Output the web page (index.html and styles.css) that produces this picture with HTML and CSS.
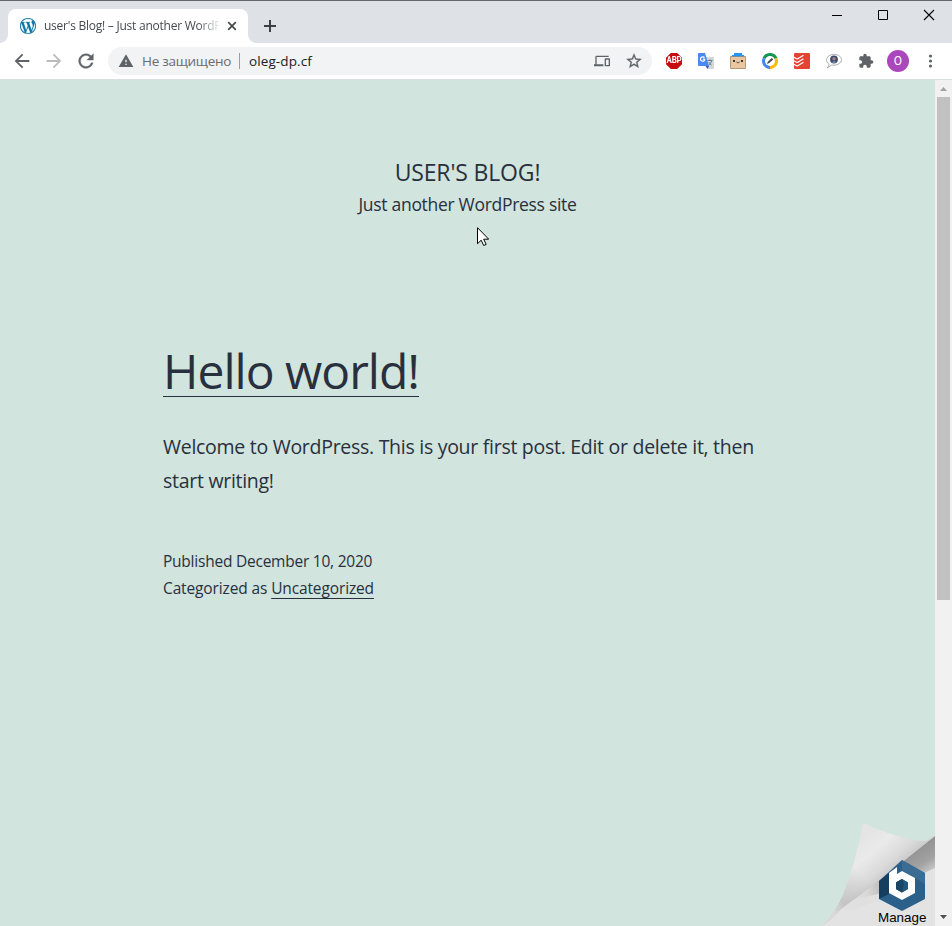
FILE: index.html
```html
<!DOCTYPE html>
<html lang="en">
<head>
<meta charset="utf-8">
<title>user's Blog! – Just another WordPress site</title>
<link rel="stylesheet" href="styles.css">
</head>
<body>
<div class="window">
  <header class="titlebar">
    <div class="tab">
      <svg class="favicon" viewBox="0 0 24 24"><circle cx="12" cy="12" r="11.5" fill="#fff"/><path fill="#1175a3" stroke="#1175a3" stroke-width=".4" d="M21.469 6.825c.84 1.537 1.318 3.3 1.318 5.175 0 3.979-2.156 7.456-5.363 9.325l3.295-9.527c.615-1.54.82-2.771.82-3.864 0-.405-.026-.78-.07-1.11m-7.981.105c.647-.03 1.232-.105 1.232-.105.582-.075.514-.93-.067-.899 0 0-1.755.135-2.88.135-1.064 0-2.85-.15-2.85-.15-.585-.03-.661.855-.075.885 0 0 .54.061 1.125.09l1.68 4.605-2.37 7.08L5.354 6.9c.649-.03 1.234-.1 1.234-.1.585-.075.516-.93-.065-.896 0 0-1.746.138-2.874.138-.2 0-.438-.008-.69-.015C4.911 3.15 8.235 1.215 12 1.215c2.809 0 5.365 1.072 7.286 2.833-.046-.003-.091-.009-.141-.009-1.06 0-1.812.923-1.812 1.914 0 .89.513 1.643 1.06 2.531.411.72.89 1.643.89 2.977 0 .915-.354 1.994-.821 3.479l-1.075 3.585-3.9-11.61.001.014zM12 22.784c-1.059 0-2.081-.153-3.048-.437l3.237-9.406 3.315 9.087c.024.053.05.101.078.149-1.12.393-2.325.609-3.582.609M1.211 12c0-1.564.336-3.05.935-4.39L7.29 21.709C3.694 19.96 1.212 16.271 1.211 12M12 0C5.385 0 0 5.385 0 12s5.385 12 12 12 12-5.385 12-12S18.615 0 12 0"/></svg>
      <span class="tab-title">user's Blog! – Just another WordP</span>
      <svg class="tab-close" viewBox="0 0 10 10"><path d="M1.2 1.2l7.6 7.6M8.800 1.200l-7.600 7.600" stroke="#45494d" stroke-width="1.7"/></svg>
    </div>
    <svg class="new-tab" viewBox="0 0 12 12"><path d="M6 0v12M0 6h12" stroke="#3c4043" stroke-width="2"/></svg>
    <div class="window-controls">
      <svg viewBox="0 0 46 30"><path d="M18 15.500h10" stroke="#000"/></svg>
      <svg viewBox="0 0 46 30"><path d="M18.500 10.500h9v9h-9z" fill="none" stroke="#000"/></svg>
      <svg viewBox="0 0 46 30"><path d="M18 10l10 10M28 10L18 20" stroke="#000" stroke-width="1.100"/></svg>
    </div>
  </header>

  <nav class="toolbar">
    <div class="nav-buttons">
      <svg viewBox="0 0 24 24"><path fill="#5f6368" d="M20 11H7.830l5.590-5.590L12 4l-8 8 8 8 1.410-1.410L7.830 13H20v-2z"/></svg>
      <svg viewBox="0 0 24 24"><path fill="#babcbe" d="M4 11h12.170l-5.590-5.590L12 4l8 8-8 8-1.410-1.410L16.170 13H4v-2z"/></svg>
      <svg viewBox="0 0 24 24"><path fill="#5f6368" stroke="#5f6368" stroke-width=".4" d="M17.650 6.350C16.200 4.900 14.210 4 12 4c-4.420 0-7.990 3.580-7.990 8s3.570 8 7.990 8c3.730 0 6.840-2.550 7.730-6h-2.080c-.82 2.330-3.040 4-5.650 4-3.310 0-6-2.690-6-6s2.690-6 6-6c1.660 0 3.140.69 4.220 1.780L13 11h7V4l-2.350 2.350z"/></svg>
    </div>
    <div class="omnibox">
      <svg class="warning" viewBox="0 0 24 24"><path fill="#5f6368" d="M1 21h22L12 2 1 21zm12-3h-2v-2h2v2zm0-4h-2v-4h2v4z"/></svg>
      <span class="security">Не защищено</span>
      <span class="divider"></span>
      <span class="url">oleg-dp.cf</span>
      <svg class="devices" viewBox="0 0 24 24"><path fill="#5f6368" d="M4 6h18V4H4c-1.100 0-2 .9-2 2v11H0v3h14v-3H4V6zm19 2h-6c-.55 0-1 .45-1 1v10c0 .55.45 1 1 1h6c.55 0 1-.45 1-1V9c0-.55-.45-1-1-1zm-1 10h-4v-8h4v8z"/></svg>
      <svg class="star" viewBox="0 0 24 24"><path fill="#5f6368" stroke="#5f6368" stroke-width=".4" d="M22 9.240l-7.190-.62L12 2 9.190 8.630 2 9.240l5.460 4.730L5.820 21 12 17.270 18.180 21l-1.630-7.030L22 9.240zM12 15.400l-3.760 2.270 1-4.280-3.320-2.880 4.380-.38L12 6.100l1.710 4.040 4.380.38-3.320 2.880 1 4.280L12 15.400z"/></svg>
    </div>
    <div class="extensions">
      <span class="abp"><span>ABP</span></span>
      <svg viewBox="0 0 16 16"><path fill="#d5d8da" d="M6 4h9.300q.7 0 .7.700v10.600q0 .7-.7.700H10z"/><path fill="#4a89f3" d="M.7 0H7l4 13H.7Q0 13 0 12.300V.7Q0 0 .7 0z"/><path fill="#3059b5" d="M7.500 13H11l-1.500 3z"/><path d="M6.900 6.200H5M6.500 4.700A2.200 2.200 0 1 0 6.900 6.200" fill="none" stroke="#fff" stroke-width="1.200"/><path d="M9.500 7.500h5M12 6.300v1.200M13.800 7.600q-.8 3-3 4.400M10.700 9q1 2 3 3.200" fill="none" stroke="#647882" stroke-width=".9"/></svg>
      <svg viewBox="0 0 16 16"><path fill="#2694f3" d="M4 0h8v2h2v2H2V2h2z"/><path fill="#e9c5a0" stroke="#a58562" stroke-width=".8" d="M.5 3.500h15v12H.5z"/><path fill="#2694f3" d="M2 2h12v1.300H2z"/><circle cx="4" cy="8" r="1"/><circle cx="12" cy="8" r="1"/><path d="M6.500 9l.8.700.700-.7.700.700.8-.7" fill="none" stroke="#222" stroke-width=".8"/></svg>
      <svg viewBox="0 0 16 16"><path fill="#159754" d="M8 8L.7 4.700a8 8 0 0 1 14.600 0z"/><path fill="#fbbc05" d="M8 8l7.300-3.300A8 8 0 0 1 8 16z"/><path fill="#4285f4" d="M8 8v8A8 8 0 0 1 .7 4.700z"/><circle cx="8" cy="8" r="5" fill="#fff"/><path d="M5 11l.8-2.300 4-3.700 1.400 1.400-4 3.700z" fill="#41464b"/></svg>
      <svg viewBox="0 0 16 16"><rect width="16" height="16" rx="1.200" fill="#e44332"/><path d="M0 4.400l2.500 1.300q.7.300 1.300 0L9.500 2.300M0 7.900l2.500 1.300q.7.300 1.300 0L9.500 5.800M0 11.400l2.500 1.300q.7.300 1.300 0L9.500 9.300" fill="none" stroke="#fff" stroke-width="1.200"/></svg>
      <svg viewBox="0 0 16 16"><path d="M3 11.200C-1 8.500.2 3.800 4.500 2q4-1.600 8 .3c4 2.300 3.800 6.500.2 8.600q-3 1.900-7.200 1.200L1.200 15q1.700-1.600 1.800-3.800z" fill="#fff" stroke="#a4a4a4" stroke-width=".9"/><circle cx="8" cy="6.500" r="3.900" fill="#3d4b68"/><circle cx="8" cy="5.800" r="1.700" fill="#9b8290"/><path d="M5.500 9.800q2.500-3 5 0z" fill="#8396bb"/></svg>
      <svg viewBox="0 0 24 24"><path fill="#5f6368" d="M20.500 11H19V7c0-1.100-.9-2-2-2h-4V3.500C13 2.120 11.880 1 10.500 1S8 2.120 8 3.500V5H4c-1.100 0-1.990.9-1.990 2v3.800H3.500c1.490 0 2.700 1.210 2.700 2.700s-1.210 2.700-2.700 2.700H2V20c0 1.100.9 2 2 2h3.800v-1.500c0-1.490 1.210-2.700 2.700-2.700 1.490 0 2.700 1.210 2.700 2.700V22H17c1.100 0 2-.9 2-2v-4h1.500c1.380 0 2.500-1.120 2.500-2.500S21.880 11 20.500 11z"/></svg>
      <span class="avatar">O</span>
      <svg viewBox="0 0 16 16"><g fill="#5f6368"><circle cx="8.500" cy="3" r="1.600"/><circle cx="8.500" cy="8" r="1.600"/><circle cx="8.500" cy="13" r="1.600"/></g></svg>
    </div>
  </nav>

  <div class="viewport">
    <main class="page">
      <header class="site-header">
        <h1 class="site-title">User's Blog!</h1>
        <p class="site-tagline">Just another WordPress site</p>
      </header>
      <article class="post">
        <h2 class="post-title"><a>Hello world!</a></h2>
        <p class="post-body">Welcome to WordPress. This is your first post. Edit or delete it, then<br>start writing!</p>
        <footer class="post-meta">
          <div class="published">Published December 10, 2020</div>
          <div class="category">Categorized as <a>Uncategorized</a></div>
        </footer>
      </article>
      <svg class="cursor" viewBox="0 0 12 19"><path d="M.5.700v16l3.700-3.500 2.500 5.300 2.500-1.100-2.500-5.200h5z" fill="#fff" stroke="#000"/></svg>
      <div class="corner">
        <svg viewBox="0 0 123 116">
          <defs>
            <linearGradient id="curl" x1="46" y1="30" x2="80" y2="70" gradientUnits="userSpaceOnUse"><stop offset="0" stop-color="#e4e4e4"/><stop offset=".35" stop-color="#eaeaea"/><stop offset=".7" stop-color="#dadada"/><stop offset="1" stop-color="#c0c0c0"/></linearGradient>
            <linearGradient id="under" x1="84" y1="53" x2="104" y2="84" gradientUnits="userSpaceOnUse"><stop offset="0" stop-color="#949494"/><stop offset=".4" stop-color="#a2a2a2"/><stop offset=".75" stop-color="#cdcdcd"/><stop offset="1" stop-color="#e3e3e3"/></linearGradient>
            <linearGradient id="fade" x1="36" y1="0" x2="84" y2="0" gradientUnits="userSpaceOnUse"><stop offset="0" stop-color="#e0e0e0"/><stop offset=".4" stop-color="#dfdfdf" stop-opacity=".9"/><stop offset="1" stop-color="#dfdfdf" stop-opacity="0"/></linearGradient>
            <linearGradient id="shade" x1="92" y1="38" x2="22" y2="104" gradientUnits="userSpaceOnUse"><stop offset=".5" stop-color="#b6b6b6" stop-opacity="0"/><stop offset=".85" stop-color="#b6b6b6" stop-opacity=".55"/><stop offset="1" stop-color="#dedede" stop-opacity=".6"/></linearGradient>
          </defs>
          <path d="M10 116Q25 103 37 92L123 26v90z" fill="#e3e3e3"/>
          <path d="M40 90L123 26v32L66 84z" fill="url(#under)"/>
          <path d="M29 99L84 57v27L40 100z" fill="url(#fade)"/>
          <path d="M51 13Q92 31 114 31L123 26 68 70 29 99Q20 110 10 116 22 104 31 85 43 55 51 13z" fill="url(#curl)"/>
          <path d="M51 13Q92 31 114 31L123 26 68 70 29 99Q20 110 10 116 22 104 31 85 43 55 51 13z" fill="url(#shade)"/>
          <path d="M90 50l23 13v26L90 101 67 89V71z" fill="#2b608b"/>
          <path d="M67 71l10-8v21l-10 5z" fill="#163f5f"/>
          <path d="M90 50l23 13v11L90 60z" fill="#447398" opacity=".65"/>
          <path d="M77 63l8-6v7l5-3 13 7v15l-13 7-13-7zM90 69l-6 3.500v6.500l6 3.500 6-3.500v-6.500z" fill="#fff" fill-rule="evenodd"/>
          <path d="M90 69l6 3.500v6.500l-6 3.500-6-3.500v-6.500z" fill="#24577e"/><path d="M84 72.500l6-3.500 2 5-2 8.500-6-3.500z" fill="#1b4564"/>
        </svg>
        <span class="corner-label">Manage</span>
      </div>
    </main>
    <aside class="scrollbar">
      <span class="arrow up"></span>
      <span class="thumb"></span>
      <span class="arrow down"></span>
    </aside>
  </div>
</div>
</body>
</html>
```
FILE: styles.css
```css
* { box-sizing: border-box; }
body { margin: 0; font-family: "Open Sans", "Noto Sans", sans-serif; overflow: hidden; }
h1, h2, p { margin: 0; font-weight: 400; }
svg { display: block; flex: none; }
.window { width: 952px; height: 926px; display: flex; flex-direction: column; background: #fff; }

.titlebar { height: 43px; flex: none; display: flex; align-items: flex-start; background: #dee1e6; border-top: 1px solid #66676a; padding-left: 8px; }
.tab { position: relative; width: 240px; height: 34px; margin-top: 8px; padding: 0 10px 0 12px; display: flex; align-items: center; background: #fff; border-radius: 8px 8px 0 0; }
.tab::before, .tab::after { content: ""; position: absolute; bottom: 0; width: 8px; height: 8px; }
.tab::before { left: -8px; background: radial-gradient(circle at 0 0, transparent 7.5px, #fff 8px); }
.tab::after { right: -8px; background: radial-gradient(circle at 100% 0, transparent 7.5px, #fff 8px); }
.favicon { width: 16px; height: 16px; }
.tab-title { width: 175px; margin-left: 8px; white-space: nowrap; font-size: 12px; line-height: 18px; letter-spacing: -.24px; color: #45494d; -webkit-mask-image: linear-gradient(90deg, #000 154px, transparent 177px); mask-image: linear-gradient(90deg, #000 154px, transparent 177px); }
.tab-close { width: 10px; height: 10px; margin-left: 8px; }
.new-tab { width: 12px; height: 12px; margin: 19px 0 0 16px; }
.window-controls { display: flex; margin-left: auto; }
.window-controls svg { width: 46px; height: 30px; margin-top: -1px; }

.toolbar { height: 37px; flex: none; display: flex; align-items: center; background: #fff; border-bottom: 1px solid #dadfdf; }
.nav-buttons { display: flex; gap: 10px; padding-left: 11px; width: 108px; }
.nav-buttons svg { width: 22px; height: 22px; }
.omnibox { width: 544px; height: 28px; border-radius: 14px; background: #f1f3f4; display: flex; align-items: center; padding: 0 9px 0 10px; font-size: 13.500px; white-space: nowrap; }
.warning { width: 16px; height: 16px; }
.security { width: 90px; margin-left: 8px; color: #686c71; letter-spacing: -.28px; }
.divider { width: 1px; height: 16px; margin: 0 9px 0 7px; background: #9a9da1; }
.url { color: #202124; letter-spacing: .1px; }
.devices { width: 16px; height: 16px; margin-left: auto; margin-right: 15px; }
.star { width: 18px; height: 18px; }
.extensions { display: grid; grid-template-columns: repeat(9, 32px); place-items: center; padding-left: 6px; }
.extensions svg { width: 16px; height: 16px; }
.abp { width: 16px; height: 16px; background: #c70d0d; color: #fff; clip-path: polygon(30% 0, 70% 0, 100% 30%, 100% 70%, 70% 100%, 30% 100%, 0 70%, 0 30%); font: 700 8px/16px Roboto, sans-serif; text-align: center; letter-spacing: -.2px; }
.abp span { display: block; transform: scaleY(1.15); }
.avatar { width: 22px; height: 22px; border-radius: 50%; background: #ab47bc; color: #fff; font: 12px/22px Roboto, sans-serif; text-align: center; }

.viewport { flex: 1; min-height: 0; display: flex; }
.page { position: relative; width: 935px; padding-top: 75px; background: #d1e4dd; color: #28303d; overflow: hidden; }
.site-header { height: 181px; text-align: center; }
.site-title { font-size: 23px; line-height: 34px; text-transform: uppercase; letter-spacing: -.15px; }
.site-tagline { font-size: 17.5px; line-height: 30px; letter-spacing: -.3px; }
.post { width: 610px; margin-left: 163px; white-space: nowrap; }
.post-title { font-size: 48px; line-height: 70px; font-weight: 400; letter-spacing: -.98px; }
.post-title a { display: inline-block; height: 61px; border-bottom: 1px solid #28303d; }
.post-body { margin-top: 24px; font-size: 19.500px; line-height: 34px; letter-spacing: -.28px; }
.post-meta { margin-top: 50px; font-size: 15.500px; line-height: 27px; letter-spacing: -.23px; }
.category { letter-spacing: -.13px; }
.post-meta a { text-decoration: underline; text-decoration-thickness: 1px; text-underline-offset: 4px; text-decoration-skip-ink: none; }
.cursor { position: absolute; left: 477px; top: 147px; width: 12px; height: 19px; }
.corner { position: absolute; right: 0; bottom: 0; width: 123px; height: 116px; }
.corner svg { width: 123px; height: 116px; }
.corner-label { position: absolute; left: 66px; bottom: 1px; color: #000; font: 13.4px/15px "Liberation Sans", sans-serif; }
.scrollbar { width: 17px; display: flex; flex-direction: column; align-items: center; background: #f1f1f1; }
.thumb { width: 13px; height: 503px; margin: 6px 1px 0 0; background: #c1c1c1; }
.arrow { width: 7px; height: 4px; }
.up { margin-top: 7px; background: #a3a3a3; clip-path: polygon(50% 0, 100% 100%, 0 100%); }
.down { margin: auto 0 7px; background: #505050; clip-path: polygon(0 0, 100% 0, 50% 100%); }
```
